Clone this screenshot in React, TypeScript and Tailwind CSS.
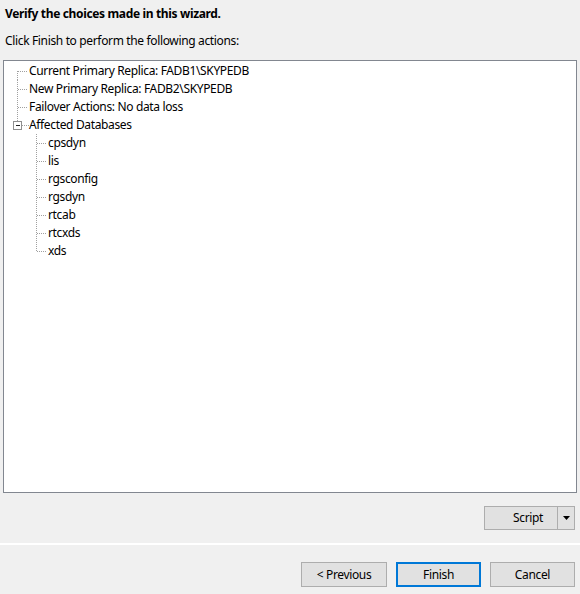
const rootItems = [
  "Current Primary Replica: FADB1\\SKYPEDB",
  "New Primary Replica: FADB2\\SKYPEDB",
  "Failover Actions: No data loss",
];

const databases = ["cpsdyn", "lis", "rgsconfig", "rgsdyn", "rtcab", "rtcxds", "xds"];

function RootConnector({ first, last, expander }: { first?: boolean; last?: boolean; expander?: boolean }) {
  return (
    <svg width="25" height="18" className="shrink-0" shapeRendering="crispEdges">
      <line
        x1="13.5"
        y1={first ? 9 : 0}
        x2="13.5"
        y2={last ? (expander ? 5 : 9) : 18}
        stroke="#a0a0a0"
        strokeDasharray="1 1"
      />
      {expander ? (
        <>
          <line x1="18" y1="9.5" x2="25" y2="9.5" stroke="#a0a0a0" strokeDasharray="1 1" />
          <rect x="9.5" y="5.5" width="8" height="8" fill="#fff" stroke="#8f8f8f" />
          <line x1="11.5" y1="9.5" x2="16" y2="9.5" stroke="#222" />
        </>
      ) : (
        <line x1="14" y1="9.5" x2="24" y2="9.5" stroke="#a0a0a0" strokeDasharray="1 1" />
      )}
    </svg>
  );
}

function ChildConnector({ last }: { last?: boolean }) {
  return (
    <svg width="44" height="18" className="shrink-0" shapeRendering="crispEdges">
      <line x1="32.5" y1="0" x2="32.5" y2={last ? 9 : 18} stroke="#a0a0a0" strokeDasharray="1 1" />
      <line x1="33" y1="9.5" x2="43" y2="9.5" stroke="#a0a0a0" strokeDasharray="1 1" />
    </svg>
  );
}

export default function App() {
  return (
    <div
      className="w-[580px] h-[594px] bg-[#f0f0f0] text-black text-[12px] leading-[16px] tracking-[-0.35px] flex flex-col overflow-hidden"
      style={{ fontFamily: '"Noto Sans", "Open Sans", sans-serif' }}
    >
      <div className="px-[5px] pt-[6px] font-bold">Verify the choices made in this wizard.</div>
      <div className="px-[5px] pt-[11px]">Click Finish to perform the following actions:</div>

      <div className="mx-[3px] mt-[11px] h-[433px] border border-[#828790] bg-white pt-[1px]">
        {rootItems.map((text, i) => (
          <div key={text} className="flex h-[18px] items-center">
            <RootConnector first={i === 0} />
            <span className="whitespace-nowrap">{text}</span>
          </div>
        ))}
        <div className="flex h-[18px] items-center">
          <RootConnector last expander />
          <span className="whitespace-nowrap">Affected Databases</span>
        </div>
        {databases.map((db, i) => (
          <div key={db} className="flex h-[18px] items-center">
            <ChildConnector last={i === databases.length - 1} />
            <span className="whitespace-nowrap">{db}</span>
          </div>
        ))}
      </div>

      <div className="flex justify-end pr-[5px] mt-[13px]">
        <div className="flex h-[24px] border border-[#adadad] bg-[#e1e1e1]">
          <button className="w-[72px] pl-[14px] text-center">Script</button>
          <div className="w-[17px] border-l border-[#adadad] flex items-center justify-center">
            <svg width="7" height="4" viewBox="0 0 7 4">
              <path d="M0 0H7L3.5 4Z" fill="#000" />
            </svg>
          </div>
        </div>
      </div>

      <div className="mt-[13px] h-[2px] bg-white" />

      <div className="flex justify-end gap-[9px] pr-[5px] mt-[17px]">
        <button className="w-[86px] h-[25px] border border-[#adadad] bg-[#e1e1e1]">&lt; Previous</button>
        <button className="w-[85px] h-[25px] border-2 border-[#0078d7] bg-[#e1e1e1]">Finish</button>
        <button className="w-[85px] h-[25px] border border-[#adadad] bg-[#e1e1e1]">Cancel</button>
      </div>
    </div>
  );
}
